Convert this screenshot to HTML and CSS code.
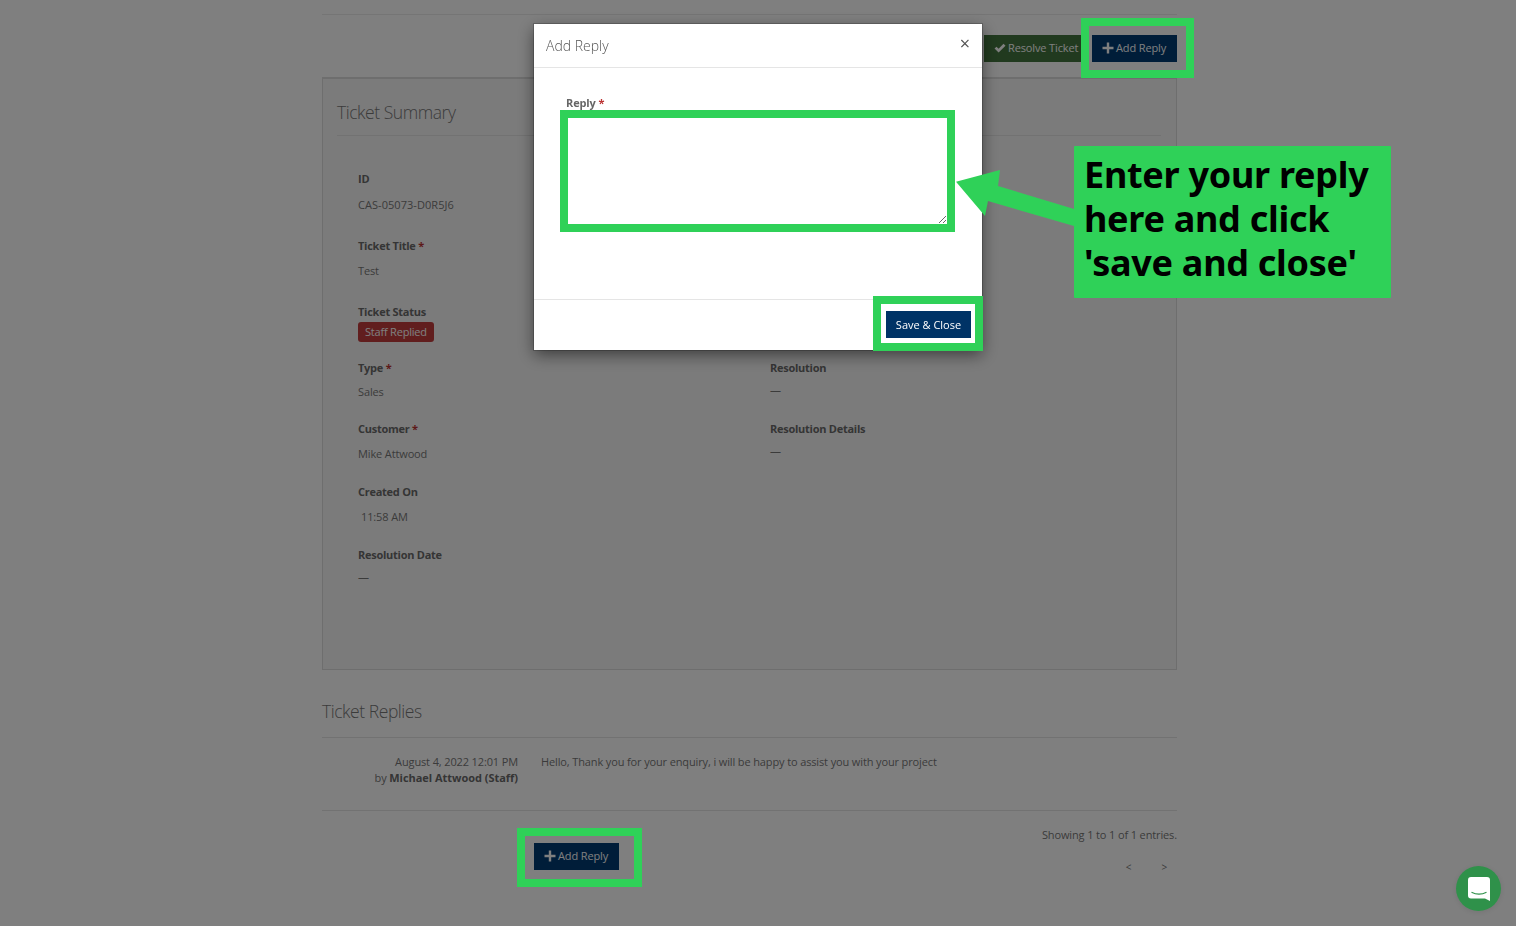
FILE: index.html
```html
<!DOCTYPE html>
<html lang="en">
<head>
<meta charset="utf-8">
<title>Add Reply</title>
<link rel="stylesheet" href="styles.css">
</head>
<body>
<main class="page">
  <div class="actions">
    <a class="btn btn-green"><svg class="ico" viewBox="0 0 12 12"><path d="M0.500 6.600 2.500 4.700 4.600 6.700 9.500 1.800 11.500 3.700 4.600 10.500Z"/></svg>Resolve Ticket</a>
    <a class="btn btn-navy hl hl-top"><svg class="ico" viewBox="0 0 12 12"><path d="M4.800 0.500h2.400v4.300H11.500v2.400H7.200V11.500H4.800V7.200H0.500V4.800h4.300Z"/></svg>Add Reply</a>
  </div>

  <section class="panel">
    <h2 class="panel-title">Ticket Summary</h2>
    <div class="cols">
      <div class="col">
        <div class="field f-67"><div class="lbl">ID</div><div class="val val-id">CAS-05073-D0R5J6</div></div>
        <div class="field f-66"><div class="lbl">Ticket Title <i>*</i></div><div class="val">Test</div></div>
        <div class="field f-56"><div class="lbl">Ticket Status</div><span class="badge">Staff Replied</span></div>
        <div class="field f-61"><div class="lbl">Type <i>*</i></div><div class="val val-tight">Sales</div></div>
        <div class="field f-63"><div class="lbl">Customer <i>*</i></div><div class="val">Mike Attwood</div></div>
        <div class="field f-63"><div class="lbl">Created On</div><div class="val val-time">11:58 AM</div></div>
        <div class="field"><div class="lbl">Resolution Date</div><div class="val val-dash">—</div></div>
      </div>
      <div class="col col-right">
        <div class="field f-61"><div class="lbl">Resolution</div><div class="val val-dash">—</div></div>
        <div class="field"><div class="lbl">Resolution Details</div><div class="val val-dash">—</div></div>
      </div>
    </div>
  </section>

  <h2 class="replies-title">Ticket Replies</h2>
  <div class="reply">
    <div class="reply-meta">August 4, 2022 12:01 PM<br>by <b>Michael Attwood (Staff)</b></div>
    <div class="reply-text">Hello, Thank you for your enquiry, i will be happy to assist you with your project</div>
  </div>
  <div class="foot">
    <a class="btn btn-navy hl hl-bottom"><svg class="ico" viewBox="0 0 12 12"><path d="M4.800 0.500h2.400v4.300H11.500v2.400H7.200V11.500H4.800V7.200H0.500V4.800h4.300Z"/></svg>Add Reply</a>
    <div class="paging">
      <div>Showing 1 to 1 of 1 entries.</div>
      <div class="pager"><span>&lt;</span><span>&gt;</span></div>
    </div>
  </div>
</main>

<div class="overlay"></div>

<div class="modal">
  <header class="modal-head"><span class="modal-title">Add Reply</span><span class="close">×</span></header>
  <div class="modal-body">
    <label class="reply-label" for="reply">Reply <i>*</i></label>
    <textarea id="reply" class="reply-box"></textarea>
  </div>
  <footer class="modal-foot"><a class="btn btn-save hl hl-save">Save &amp; Close</a></footer>
</div>

<svg class="arrow" viewBox="0 0 125 70"><polygon points="0,16.700 44,5 42,21 118,44 118,61 32,36 29,51"/></svg>
<div class="callout">Enter your reply<br>here and click<br>'save and close'</div>

<div class="chat"><svg viewBox="0 0 22 24" width="22" height="24"><path d="M3 0h16a3 3 0 0 1 3 3v21l-5-2.400H3a3 3 0 0 1-3-3V3a3 3 0 0 1 3-3Z" fill="#fff"/><path d="M3.500 15.200c4.500 2.300 10.500 2.300 15 0" fill="none" stroke="#2f914a" stroke-width="1.200"/></svg></div>
</body>
</html>
```

FILE: styles.css
```css
* { box-sizing: border-box; }
html, body { height: 100%; }
body {
  margin: 0;
  height: 926px;
  overflow: hidden;
  background: #fff;
  font-family: "Open Sans", "Noto Sans", sans-serif;
  font-size: 11px;
  line-height: 16px;
  letter-spacing: -0.13px;
  color: #777;
}
i { font-style: normal; color: #b33; }

.page {
  width: 855px;
  margin-left: 322px;
  padding-top: 14px;
}
.actions {
  display: flex;
  justify-content: flex-end;
  gap: 10px;
  height: 63px;
  padding-top: 20px;
  border-top: 1px solid #ebebeb;
}
.btn {
  display: inline-flex;
  align-items: center;
  height: 27px;
  padding: 0 10px 2px;
  color: #fff;
  font-size: 11px;
  white-space: nowrap;
}
.btn-green { background: #43753e; color: #fff; width: 98px; }
.btn-navy { background: #003a73; width: 85px; position: relative; }
.ico { width: 12px; height: 12px; margin-right: 2px; fill: #fff; flex: none; }

.hl::after {
  content: "";
  position: absolute;
  z-index: 20;
  border: 8px solid #2fd158;
}
.hl-top::after { left: -11px; right: -17px; top: -17px; bottom: -16px; }
.hl-bottom::after { left: -17px; right: -23px; top: -15px; bottom: -17px; }
.hl-save::after { left: -13px; right: -12px; top: -15px; bottom: -13px; }

.panel {
  height: 593px;
  padding: 0 15px 0 14px;
  background: #f7f7f7;
  border: 1px solid #ddd;
  border-top-width: 2px;
}
.panel-title {
  margin: 0;
  height: 57px;
  padding-top: 21px;
  font-size: 17.5px;
  line-height: 24px;
  font-weight: 300;
  letter-spacing: -0.45px;
  color: #777;
  border-bottom: 1px solid #e4e4e4;
}
.cols { display: flex; padding: 35px 0 0 21px; }
.col { flex: none; width: 412px; }
.col-right { padding-top: 189px; }
.lbl { font-weight: 700; color: #6a6a6a; letter-spacing: -0.26px; }
.val { margin-top: 9px; }
.val-id { margin-top: 10px; letter-spacing: 0.05px; }
.val-tight { margin-top: 8px; }
.val-dash { margin-top: 6px; }
.val-time { padding-left: 3px; }
.f-67 { height: 67px; }
.f-66 { height: 66px; }
.f-56 { height: 56px; }
.f-61 { height: 61px; }
.f-63 { height: 63px; }
.badge {
  display: inline-block;
  height: 20px;
  margin-top: 2px;
  padding: 0 7px;
  line-height: 20px;
  border-radius: 3px;
  background: #c23d3d;
  color: #fff;
  letter-spacing: -0.2px;
}

.replies-title {
  margin: 0;
  height: 68px;
  padding-top: 29px;
  font-size: 17.5px;
  line-height: 24px;
  font-weight: 300;
  letter-spacing: -0.45px;
  color: #777;
  border-bottom: 1px solid #e4e4e4;
}
.reply {
  display: flex;
  height: 73px;
  padding-top: 16px;
  border-bottom: 1px solid #e4e4e4;
}
.reply-meta { width: 196px; text-align: right; }
.reply-meta b { color: #6a6a6a; letter-spacing: -0.03px; }
.reply-text { margin-left: 23px; }
.foot { display: flex; padding-top: 32px; position: relative; }
.foot .btn { margin-left: 212px; }
.paging { margin-left: auto; margin-top: -16px; text-align: right; }
.pager {
  display: flex;
  justify-content: flex-end;
  gap: 30px;
  margin-top: 16px;
  padding-right: 10px;
  font-size: 10px;
}

.overlay { position: fixed; inset: 0; z-index: 10; background: rgba(0,0,0,.5); }

.modal {
  position: fixed;
  left: 534px;
  top: 24px;
  z-index: 15;
  width: 448px;
  height: 326px;
  display: flex;
  flex-direction: column;
  background: #fff;
  box-shadow: 0 0 0 1px rgba(0,0,0,.2), 0 5px 15px rgba(0,0,0,.5);
}
.modal-head {
  display: flex;
  justify-content: space-between;
  height: 44px;
  padding: 10px 12px 0 12px;
  border-bottom: 1px solid #e5e5e5;
}
.modal-title { font-size: 14px; line-height: 24px; font-weight: 300; color: #555; letter-spacing: 0; }
.close { font-size: 18px; line-height: 18px; color: #555; }
.modal-body { flex: 1; padding: 27px 27px 0 26px; }
.reply-label { display: block; margin-left: 6px; font-weight: 700; color: #666; line-height: 16px; height: 15px; }
.reply-box {
  display: block;
  width: 395px;
  height: 122px;
  margin: 0;
  border: 8px solid #2fd158;
  outline: 0;
  background: #fff;
}
.modal-foot {
  height: 51px;
  padding: 11px 11px 0 0;
  display: flex;
  justify-content: flex-end;
  border-top: 1px solid #e5e5e5;
}
.btn-save { position: relative; background: #003366; width: 85px; justify-content: center; padding: 0; letter-spacing: 0; }

.arrow {
  position: fixed;
  left: 956px;
  top: 165px;
  z-index: 18;
  width: 125px;
  height: 70px;
  fill: #2fd158;
}
.callout {
  position: fixed;
  left: 1074px;
  top: 146px;
  z-index: 19;
  width: 317px;
  height: 152px;
  padding: 7px 0 0 10px;
  border-radius: 1px;
  background: #2fd158;
  color: #000;
  font-family: "Noto Sans", sans-serif;
  font-size: 36px;
  line-height: 44px;
  font-weight: 700;
  letter-spacing: -0.28px;
  white-space: nowrap;
}
.chat {
  position: fixed;
  left: 1456px;
  top: 866px;
  z-index: 20;
  width: 45px;
  height: 45px;
  display: flex;
  align-items: center;
  justify-content: center;
  border-radius: 50%;
  background: #2f914a;
  box-shadow: 0 1px 6px rgba(0,0,0,.1);
}
```
